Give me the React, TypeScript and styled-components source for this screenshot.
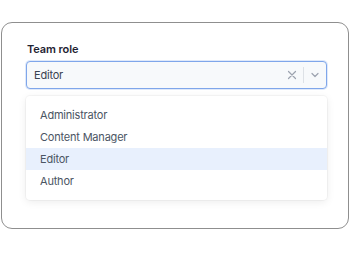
import React from 'react';
import styled, { createGlobalStyle } from 'styled-components';

const GlobalStyle = createGlobalStyle`
  html, body {
    margin: 0;
    padding: 0;
    background: #ffffff;
    font-family: Inter, "Noto Sans", sans-serif;
  }
`;

const Page = styled.div`
  width: 350px;
  height: 263px;
  padding-top: 22px;
  box-sizing: border-box;
`;

const Card = styled.div`
  margin-left: 1px;
  width: 348px;
  height: 207px;
  box-sizing: border-box;
  border: 1px solid #8f8f8f;
  border-radius: 11px;
  padding: 18px 21px 0 24px;
  background: #ffffff;
`;

const Label = styled.div`
  font-size: 11px;
  font-weight: 600;
  color: #1f2433;
  line-height: 16px;
  margin-left: 1px;
  margin-bottom: 4px;
  letter-spacing: -0.1px;
`;

const SelectBox = styled.div`
  height: 28px;
  box-sizing: border-box;
  border: 1px solid #7fa6ea;
  border-radius: 4px;
  background: #f7f9fb;
  display: flex;
  align-items: center;
  padding: 0 0 0 7px;
  box-shadow: 0 0 0 1px rgba(127, 166, 234, 0.25);
`;

const Value = styled.span`
  flex: 1;
  font-size: 11px;
  color: #3b4252;
  letter-spacing: -0.2px;
`;

const Indicators = styled.div`
  display: flex;
  align-items: center;
  height: 100%;
`;

const IconButton = styled.span`
  display: flex;
  align-items: center;
  justify-content: center;
  width: 22px;
  height: 100%;
  color: #9ca3af;
`;

const Divider = styled.span`
  width: 1px;
  height: 16px;
  background: #dde1e6;
`;

const Menu = styled.ul`
  list-style: none;
  margin: 7px 0 0 0;
  padding: 8px 0;
  background: #ffffff;
  border-radius: 4px;
  box-shadow: 0 2px 8px rgba(0, 0, 0, 0.08), 0 0 0 1px rgba(0, 0, 0, 0.03);
`;

const Option = styled.li<{ selected?: boolean }>`
  height: 22px;
  display: flex;
  align-items: center;
  padding-left: 14px;
  font-size: 11px;
  letter-spacing: -0.2px;
  color: #4b5563;
  background: ${p => (p.selected ? '#e8f0fd' : 'transparent')};
`;

const options = ['Administrator', 'Content Manager', 'Editor', 'Author'];

const App: React.FC = () => {
  const value = 'Editor';

  return (
    <Page>
      <GlobalStyle />
      <Card>
        <Label>Team role</Label>
        <SelectBox>
          <Value>{value}</Value>
          <Indicators>
            <IconButton>
              <svg width="10" height="10" viewBox="0 0 10 10" fill="none" stroke="currentColor" strokeWidth="1.2" strokeLinecap="round">
                <path d="M1.5 1.5l7 7M8.5 1.5l-7 7" />
              </svg>
            </IconButton>
            <Divider />
            <IconButton>
              <svg width="10" height="10" viewBox="0 0 10 10" fill="none" stroke="currentColor" strokeWidth="1.2" strokeLinecap="round" strokeLinejoin="round">
                <path d="M2 3.5l3 3 3-3" />
              </svg>
            </IconButton>
          </Indicators>
        </SelectBox>
        <Menu>
          {options.map(o => (
            <Option key={o} selected={o === value}>
              {o}
            </Option>
          ))}
        </Menu>
      </Card>
    </Page>
  );
};

export default App;
